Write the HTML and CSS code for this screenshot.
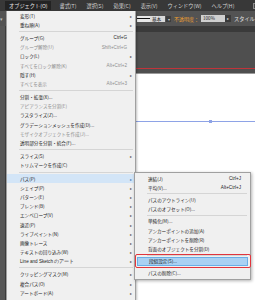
FILE: index.html
```html
<!DOCTYPE html>
<html>
<head>
<meta charset="utf-8">
<link rel="stylesheet" href="styles.css">
</head>
<body>
<div class="app">
  <div class="menubar">
    <span class="mb-item active">オブジェクト(O)</span>
    <span class="mb-item">書式(T)</span>
    <span class="mb-item">選択(S)</span>
    <span class="mb-item">効果(C)</span>
    <span class="mb-item">表示(V)</span>
    <span class="mb-item">ウィンドウ(W)</span>
    <span class="mb-item">ヘルプ(H)</span>
    <span class="mb-sep"></span>
    <span class="mb-icon"></span>
    <span class="mb-icon"></span>
  </div>
  <div class="control">
    <div class="ctl-left"><span class="mini">▾</span></div>
    <div class="stroke"><span class="line"></span></div>
    <div class="combo">基本</div>
    <div class="drop">▾</div>
    <div class="opacity">不透明度：</div>
    <div class="field">100%</div>
    <div class="fbtn">▸</div>
    <div class="style">スタイル</div>
  </div>
  <div class="work">
    <div class="tools"></div>
    <div class="main">
      <div class="tabband"></div>
      <div class="dark"><div class="redline"></div></div>
      <div class="canvas">
        <div class="guide"><span class="handle"></span></div>
      </div>
    </div>
  </div>

  <div class="menu">
    <div class="row"><span class="lbl">変形(T)</span><span class="arr">▸</span></div>
    <div class="row"><span class="lbl">重ね順(A)</span><span class="arr">▸</span></div>
    <div class="sep"></div>
    <div class="row"><span class="lbl">グループ(G)</span><span class="sc">Ctrl+G</span><span class="arr"></span></div>
    <div class="row dis"><span class="lbl">グループ解除(U)</span><span class="sc">Shift+Ctrl+G</span><span class="arr"></span></div>
    <div class="row"><span class="lbl">ロック(L)</span><span class="arr">▸</span></div>
    <div class="row dis"><span class="lbl">すべてをロック解除(K)</span><span class="sc">Alt+Ctrl+2</span><span class="arr"></span></div>
    <div class="row"><span class="lbl">隠す(H)</span><span class="arr">▸</span></div>
    <div class="row dis"><span class="lbl">すべてを表示</span><span class="sc">Alt+Ctrl+3</span><span class="arr"></span></div>
    <div class="sep"></div>
    <div class="row"><span class="lbl">分割・拡張(X)...</span><span class="arr"></span></div>
    <div class="row dis"><span class="lbl">アピアランスを分割(E)</span><span class="arr"></span></div>
    <div class="row"><span class="lbl">ラスタライズ(Z)...</span><span class="arr"></span></div>
    <div class="row"><span class="lbl">グラデーションメッシュを作成(D)...</span><span class="arr"></span></div>
    <div class="row dis"><span class="lbl">モザイクオブジェクトを作成(J)...</span><span class="arr"></span></div>
    <div class="row"><span class="lbl">透明部分を分割・統合(F)...</span><span class="arr"></span></div>
    <div class="sep"></div>
    <div class="row"><span class="lbl">スライス(S)</span><span class="arr">▸</span></div>
    <div class="row"><span class="lbl">トリムマークを作成(C)</span><span class="arr"></span></div>
    <div class="sep"></div>
    <div class="row hl"><span class="lbl">パス(P)</span><span class="arr">▸</span></div>
    <div class="row"><span class="lbl">シェイプ(P)</span><span class="arr">▸</span></div>
    <div class="row"><span class="lbl">パターン(E)</span><span class="arr">▸</span></div>
    <div class="row"><span class="lbl">ブレンド(B)</span><span class="arr">▸</span></div>
    <div class="row"><span class="lbl">エンベロープ(V)</span><span class="arr">▸</span></div>
    <div class="row"><span class="lbl">遠近(P)</span><span class="arr">▸</span></div>
    <div class="row"><span class="lbl">ライブペイント(N)</span><span class="arr">▸</span></div>
    <div class="row"><span class="lbl">画像トレース</span><span class="arr">▸</span></div>
    <div class="row"><span class="lbl">テキストの回り込み(W)</span><span class="arr">▸</span></div>
    <div class="row"><span class="lbl lat">Line and Sketch のアート</span><span class="arr">▸</span></div>
    <div class="sep"></div>
    <div class="row"><span class="lbl">クリッピングマスク(M)</span><span class="arr">▸</span></div>
    <div class="row"><span class="lbl">複合パス(O)</span><span class="arr">▸</span></div>
    <div class="row"><span class="lbl">アートボード(A)</span><span class="arr">▸</span></div>
  </div>

  <div class="submenu">
    <div class="row"><span class="lbl">連結(J)</span><span class="sc">Ctrl+J</span></div>
    <div class="row"><span class="lbl">平均(V)...</span><span class="sc">Alt+Ctrl+J</span></div>
    <div class="sep"></div>
    <div class="row"><span class="lbl">パスのアウトライン(U)</span></div>
    <div class="row"><span class="lbl">パスのオフセット(O)...</span></div>
    <div class="sep"></div>
    <div class="row"><span class="lbl">単純化(M)...</span></div>
    <div class="row"><span class="lbl">アンカーポイントの追加(A)</span></div>
    <div class="row"><span class="lbl">アンカーポイントを削除(R)</span></div>
    <div class="row"><span class="lbl">背面のオブジェクトを分割(D)</span></div>
    <div class="sep"></div>
    <div class="row sel"><span class="lbl">段組設定(S)...</span></div>
    <div class="sep"></div>
    <div class="row"><span class="lbl">パスの削除(C)...</span></div>
    <div class="mark"></div>
  </div>
</div>
</body>
</html>
```

FILE: styles.css
```css
* { box-sizing: border-box; }
html, body { margin: 0; padding: 0; }
body {
  width: 255px;
  height: 300px;
  overflow: hidden;
  background: #4e4e4e;
  font-family: "Noto Sans CJK JP", "Liberation Sans", sans-serif;
}
.app {
  position: relative;
  width: 255px;
  height: 300px;
  display: flex;
  flex-direction: column;
}

/* top menubar */
.menubar {
  height: 11px;
  background: #383838;
  display: flex;
  align-items: center;
  gap: 6px;
  padding-left: 5px;
  color: #d2d2d2;
  font-size: 5.2px;
  white-space: nowrap;
  flex: none;
}
.mb-item { line-height: 9px; padding: 0 2px; }
.mb-item.active { background: #232323; color: #e6e6e6; padding: 0 4px; }
.mb-sep { width: 1px; height: 8px; background: #5a5a5a; margin-left: 2px; }
.mb-icon {
  width: 7px; height: 6px;
  border: 1px solid #8a8a8a;
  background: #4a4a4a;
  flex: none;
  margin-left: 3px;
}

/* control bar */
.control {
  height: 15px;
  background: #535353;
  display: flex;
  align-items: center;
  flex: none;
  font-size: 5px;
  white-space: nowrap;
}
.ctl-left { width: 6px; color: #bdbdbd; font-size: 5px; }
.stroke {
  margin-left: 131px;
  width: 13px; height: 6px;
  background: #e8e8e8;
  display: flex; align-items: center;
}
.stroke .line { display: block; width: 100%; height: 1px; background: #111; }
.combo {
  width: 15px; height: 6px;
  background: #dadada; color: #222;
  line-height: 6px; font-size: 4.6px;
  padding-left: 2px;
}
.drop {
  width: 5px; height: 6px;
  background: #3d3d3d; color: #ccc;
  font-size: 4px; line-height: 6px; text-align: center;
  margin-left: 1px;
}
.opacity { color: #f0a030; margin-left: 3px; font-size: 5px; }
.field {
  margin-left: 2px;
  width: 24px; height: 7px;
  background: #cfcfcf; color: #222;
  font-size: 4.6px; line-height: 7px; padding-left: 2px;
}
.fbtn {
  width: 6px; height: 7px;
  background: #3a3a3a; color: #ddd;
  font-size: 4px; line-height: 7px; text-align: center;
}
.style { color: #e0e0e0; margin-left: 3px; font-size: 5.2px; }

/* workspace */
.work { flex: 1; display: flex; }
.tools { width: 6px; background: #575757; border-right: 1px solid #3c3c3c; flex: none; }
.main { flex: 1; display: flex; flex-direction: column; }
.tabband { height: 6px; background: #3a3a3a; flex: none; }
.dark { height: 41px; background: #4f4f4f; position: relative; flex: none; }
.redline { position: absolute; left: 0; right: 0; top: 36px; height: 1px; background: #c0343a; }
.canvas {
  flex: 1;
  background: #ffffff;
  border-top: 1px solid #9a9a9a;
  padding-top: 47px;
}
.guide { height: 1px; background: #8ea3e6; position: relative; }
.handle {
  position: absolute; left: 203px; top: -1px;
  width: 3px; height: 3px; background: #8ea3e6;
}

/* main dropdown */
.menu {
  position: absolute;
  left: 6px; top: 11px;
  width: 130px;
  height: 289px;
  overflow: hidden;
  background: #f0f0f0;
  border: 1px solid #a0a0a0;
  border-top: none;
  border-bottom: none;
  font-size: 4.6px;
  color: #1c1c1c;
  box-shadow: 1px 1px 2px rgba(0,0,0,0.25);
}
.row {
  height: 9.2px;
  display: flex;
  align-items: center;
  padding-left: 13px;
  white-space: nowrap;
}
.row .lbl { flex: 1; }
.row .lat { font-family: "Liberation Sans", sans-serif; }
.row .sc { font-family: "Liberation Sans", sans-serif; }
.menu .arr { width: 8px; text-align: center; color: #555; font-size: 4px; }
.row.dis { color: #8e8e8e; }
.row.hl { background: #d3e5f7; }
.row.hl .arr { color: #4a7fb8; }
.sep { height: 4px; position: relative; }
.sep::after {
  content: ""; position: absolute;
  left: 12px; right: 2px; top: 1.5px;
  height: 1px; background: #d5d5d5;
}

/* submenu */
.submenu {
  position: absolute;
  left: 134px; top: 172px;
  width: 117px;
  padding: 1px 1px;
  background: #f0f0f0;
  border: 1px solid #a0a0a0;
  font-size: 4.6px;
  color: #1c1c1c;
  box-shadow: 1px 1px 3px rgba(0,0,0,0.3);
}
.submenu .row { padding-left: 12px; padding-right: 8px; }
.submenu .sep { height: 3px; }
.submenu .sep::after { top: 1px; left: 11px; }
.row.sel {
  background: #a9d1f3;
  border: 1px solid #6aaee6;
  margin: 0 1px;
  padding-left: 11px;
}
.mark {
  position: absolute;
  left: 0px; top: 81px;
  width: 116px; height: 14px;
  border: 1.5px solid #e0353d;
  border-radius: 2px;
}
```
